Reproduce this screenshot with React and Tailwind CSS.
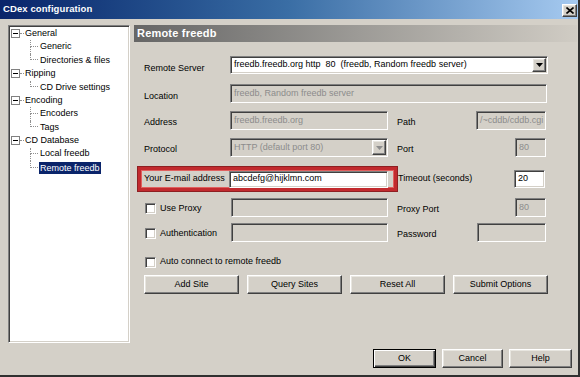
import React from "react";

const sunken =
  "border border-t-[#808080] border-l-[#808080] border-b-white border-r-white shadow-[inset_1px_1px_0_#404040,inset_-1px_-1px_0_#d4d0c8]";
const raised =
  "border border-t-white border-l-white border-b-[#404040] border-r-[#404040] shadow-[inset_-1px_-1px_0_#808080,inset_1px_1px_0_#e8e6e0] bg-[#d4d0c8]";

function Field({ w, h = "h-[19px]", text = "", disabled = true, className = "" }) {
  return (
    <div
      className={`${w} ${h} ${sunken} ${disabled ? "bg-[#d4d0c8] text-[#8c8c8c]" : "bg-white text-black"} flex items-center pl-[3px] overflow-hidden whitespace-nowrap ${className}`}
    >
      {text}
    </div>
  );
}

function Arrow({ disabled }) {
  return (
    <div className={`w-[14px] h-full ${raised} flex items-center justify-center shrink-0`}>
      <svg width="7" height="4" viewBox="0 0 7 4">
        <path d="M0 0H7L3.5 4Z" fill={disabled ? "#8c8c8c" : "#000"} />
      </svg>
    </div>
  );
}

function Combo({ w, text, disabled }) {
  return (
    <div
      className={`${w} h-[19px] ${sunken} ${disabled ? "bg-[#d4d0c8] text-[#8c8c8c]" : "bg-white text-black"} flex items-stretch p-[1px] overflow-hidden whitespace-nowrap`}
    >
      <div className="flex-1 flex items-center pl-[2px] overflow-hidden">{text}</div>
      <Arrow disabled={disabled} />
    </div>
  );
}

function Check() {
  return <div className={`w-[11px] h-[11px] bg-white ${sunken} shrink-0`} />;
}

function Button({ w, children, def }) {
  return (
    <div
      className={`${w} h-[19px] flex items-center justify-center bg-[#d4d0c8] ${
        def
          ? "border border-black shadow-[inset_1px_1px_0_#fff,inset_-1px_-1px_0_#404040,inset_-2px_-2px_0_#808080]"
          : raised
      }`}
    >
      {children}
    </div>
  );
}

const tree = [
  { label: "General", children: ["Generic", "Directories & files"] },
  { label: "Ripping", children: ["CD Drive settings"] },
  { label: "Encoding", children: ["Encoders", "Tags"] },
  { label: "CD Database", children: ["Local freedb", "Remote freedb"] },
];

function Tree() {
  return (
    <div className={`ml-[8px] w-[122px] h-[318px] bg-white ${sunken} pt-[1px]`}>
      {tree.map((node) => (
        <div key={node.label}>
          <div className="h-[13.4px] flex items-center pl-[2px]">
            <div className="w-[9px] h-[9px] border border-[#808080] bg-white flex items-center justify-center">
              <div className="w-[5px] h-[1px] bg-black" />
            </div>
            <div className="w-[4px] border-t border-dotted border-[#909090]" />
            <span className="ml-[1px]">{node.label}</span>
          </div>
          {node.children.map((c, i) => {
            const last = i === node.children.length - 1;
            const sel = c === "Remote freedb";
            return (
              <div key={c} className="h-[13.4px] flex items-stretch">
                <div className="w-[21px] shrink-0" />
                <div className="w-[8px] flex flex-col shrink-0">
                  <div className="h-1/2 border-l border-b border-dotted border-[#909090]" />
                  <div className={`h-1/2 ${last ? "" : "border-l border-dotted border-[#909090]"}`} />
                </div>
                <div className="flex items-center ml-[1px]">
                  <span className={sel ? "bg-[#0a246a] text-white px-[1px] leading-[12px]" : "px-[1px]"}>{c}</span>
                </div>
              </div>
            );
          })}
        </div>
      ))}
    </div>
  );
}

function Label({ w, children, className = "" }) {
  return <div className={`${w} shrink-0 pt-[4px] self-stretch flex items-center ${className}`}>{children}</div>;
}

export default function App() {
  return (
    <div className="w-[580px] h-[377px] bg-[#d4d0c8] flex flex-col border-r-2 border-b-2 border-r-[#303030] border-b-[#303030] font-['Liberation_Sans',Arial,sans-serif] text-[9px] text-black overflow-hidden">
      {/* Title bar */}
      <div className="h-[19px] bg-linear-to-r from-[#0a246a] via-[#3a6ea5] to-[#a6caf0] flex items-center justify-between pl-[3px] pr-[1px] shrink-0">
        <span className="text-white font-bold text-[9.5px] tracking-[0.1px]">CDex configuration</span>
        <div className={`w-[15px] h-[13px] mt-[2px] ${raised} flex items-center justify-center`}>
          <svg width="8" height="7" viewBox="0 0 8 7">
            <path d="M0.5 0.5L7.5 6.5M7.5 0.5L0.5 6.5" stroke="#000" strokeWidth="1.6" />
          </svg>
        </div>
      </div>

      {/* Body */}
      <div className="flex mt-[6px] h-[318px]">
        <Tree />
        <div className="ml-[4px] w-[443px] flex flex-col">
          <div className="h-[17px] bg-linear-to-r from-[#666666] via-[#9c9a96] to-[#d0ccc4] flex items-center pl-[3px]">
            <span className="text-white font-bold text-[11px] tracking-[0.2px]">Remote freedb</span>
          </div>

          {/* Remote server */}
          <div className="flex mt-[14px] h-[18px] pl-[10px]">
            <Label w="w-[86px]" className="pt-[8px]">Remote Server</Label>
            <div className={`w-[318px] h-[18px] ${sunken} bg-white flex items-stretch p-[1px] whitespace-nowrap`}>
              <div className="flex-1 flex items-center pl-[2px] overflow-hidden">
                freedb.freedb.org http&nbsp;&nbsp;80&nbsp;&nbsp;(freedb, Random freedb server)
              </div>
              <Arrow />
            </div>
          </div>

          {/* Location */}
          <div className="flex mt-[10px] h-[19px] pl-[10px]">
            <Label w="w-[86px]" className="pt-[7px]">Location</Label>
            <Field w="w-[317px]" text="freedb, Random freedb server" />
          </div>

          {/* Address / Path */}
          <div className="flex mt-[8px] h-[19px] pl-[10px]">
            <Label w="w-[86px]">Address</Label>
            <Field w="w-[158px]" text="freedb.freedb.org" />
            <Label w="w-[79px]" className="pl-[9px] box-content">Path</Label>
            <Field w="w-[70px]" text="/~cddb/cddb.cgi" />
          </div>

          {/* Protocol / Port */}
          <div className="flex mt-[8px] h-[19px] pl-[10px]">
            <Label w="w-[86px]">Protocol</Label>
            <Combo w="w-[158px]" text="HTTP (default port 80)" disabled />
            <Label w="w-[118px]" className="pl-[9px] box-content">Port</Label>
            <Field w="w-[31px]" text="80" />
          </div>

          {/* Email / Timeout */}
          <div className="flex mt-[10px] h-[24px] pl-[4px] items-center">
            <div className="w-[259px] h-[24px] border-[3px] border-[#c22a2e] shadow-[0_0_0_1px_#8e1f22,inset_0_0_0_1px_#e0605f] flex items-center pl-[3px] shrink-0">
              <div className="w-[85px] shrink-0">Your E-mail address</div>
              <Field w="w-[159px]" h="h-[17px]" text="abcdefg@hijklmn.com" disabled={false} />
            </div>
            <div className="w-[117px] pl-[1px] shrink-0">Timeout (seconds)</div>
            <Field w="w-[31px]" h="h-[18px]" text="20" disabled={false} />
          </div>

          {/* Use Proxy */}
          <div className="flex mt-[7px] h-[19px] pl-[10px]">
            <div className="w-[87px] shrink-0 flex items-center pt-[2px]">
              <div className="ml-[1px]"><Check /></div>
              <span className="ml-[4px]">Use Proxy</span>
            </div>
            <Field w="w-[157px]" />
            <Label w="w-[118px]" className="pl-[9px] box-content">Proxy Port</Label>
            <Field w="w-[31px]" text="80" />
          </div>

          {/* Authentication */}
          <div className="flex mt-[6px] h-[19px] pl-[10px]">
            <div className="w-[87px] shrink-0 flex items-center pt-[2px]">
              <div className="ml-[1px]"><Check /></div>
              <span className="ml-[4px]">Authentication</span>
            </div>
            <Field w="w-[157px]" />
            <Label w="w-[80px]" className="pl-[9px] box-content">Password</Label>
            <Field w="w-[69px]" />
          </div>

          {/* Auto connect */}
          <div className="flex mt-[14px] h-[12px] pl-[11px] items-center">
            <Check />
            <span className="ml-[4px]">Auto connect to remote freedb</span>
          </div>

          {/* Buttons */}
          <div className="flex mt-[7px] pl-[10px] gap-[8px]">
            <Button w="w-[95px]">Add Site</Button>
            <Button w="w-[95px]">Query Sites</Button>
            <Button w="w-[95px]">Reset All</Button>
            <Button w="w-[95px]">Submit Options</Button>
          </div>
        </div>
      </div>

      {/* Bottom buttons */}
      <div className="flex justify-end gap-[6px] mt-[6px] pr-[6px]">
        <Button w="w-[63px]" def>OK</Button>
        <Button w="w-[61px]">Cancel</Button>
        <Button w="w-[63px]">Help</Button>
      </div>
    </div>
  );
}
